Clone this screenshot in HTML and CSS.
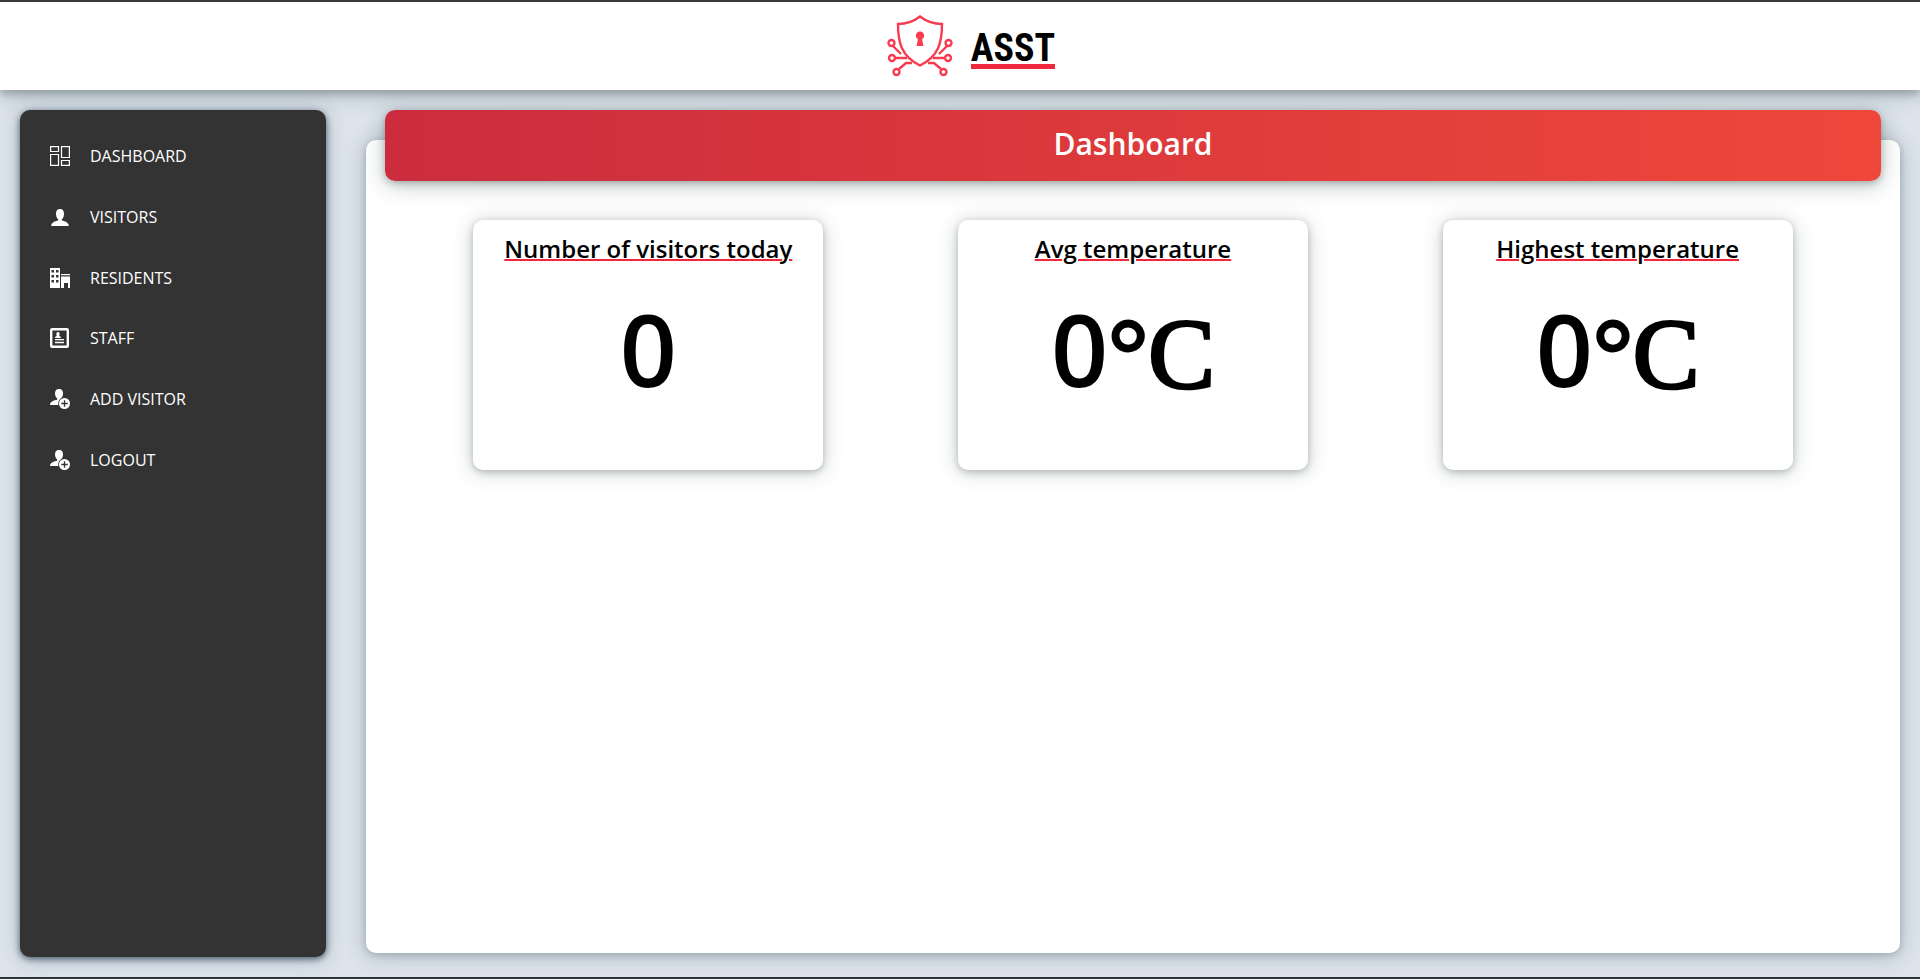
FILE: index.html
```html
<!DOCTYPE html>
<html lang="en">
<head>
<meta charset="utf-8">
<title>ASST Dashboard</title>
<link rel="stylesheet" href="styles.css">
</head>
<body>
<svg class="defs" aria-hidden="true">
  <symbol id="i-dashboard" viewBox="0 0 20 20"><path fill="none" stroke="currentColor" stroke-width="1.200" d="M.6.6h7.900v4.900H.6zM11.500.6h7.900v10.900h-7.900zM.6 8.500h7.900v10.900H.6zM11.500 14.500h7.900v4.900h-7.900z"/></symbol>
  <symbol id="i-person" viewBox="0 0 20 20"><path fill="currentColor" d="M10 2C7 2 6 4.200 6 7c0 2.400 1 4.300 2.200 5.300v1.200C5 14.200 1.200 15.500 1.200 19h17.600c0-3.500-3.800-4.800-7-5.500v-1.200C13 11.300 14 9.400 14 7c0-2.800-1-5-4-5z"/></symbol>
  <symbol id="i-building" viewBox="0 0 20 20"><path fill="currentColor" fill-rule="evenodd" d="M0 0h10v20H0zM1.500 2v2.500H4V2zM6 2v2.500h2.500V2zM1.500 7v2.500H4V7zM6 7v2.500h2.500V7zM1.500 12v2.500H4V12zM6 12v2.500h2.500V12zM11 6h9v1.300h-9zM11 8.500h9V20h-2v-5h-4v5h-3z"/></symbol>
  <symbol id="i-staff" viewBox="0 0 20 20"><path fill="none" stroke="currentColor" stroke-width="2.400" d="M1.200 2.200q0-1 1-1h14.600q1 0 1 1v15.600q0 1-1 1H2.200q-1 0-1-1z"/><path fill="currentColor" d="M8 4c-2 0-2 3-1 4-1 .3-2 .6-2 2h6c0-1.400-1-1.700-2-2 1-1 1-4-1-4zM5 11h9v1.300H5zM5 13.700h9v1.500H5z"/></symbol>
  <symbol id="i-add" viewBox="0 0 20 20"><path fill="currentColor" d="M9 0C6 0 5 2 5 4.500c0 2.200 1 4 2.200 5v1.300C4 11.500 0 12.500 0 16h8.300c-.5-3.500 1-6 3.300-7.300C12.600 7.700 13 6 13 4.500 13 2 12 0 9 0z"/><circle cx="14.500" cy="14.500" r="5.500" fill="currentColor"/><path stroke="#333" stroke-width="1.300" d="M14.500 11.300v6.400M11.300 14.500h6.400"/></symbol>
</svg>
<header class="topbar">
  <svg class="shield" viewBox="0 0 66 62" fill="none" stroke="#f83c50" stroke-width="2.400" aria-hidden="true">
    <path d="M33 1.500C26 7 18 9 11 9c0 18 3 32 22 41.500C52 41 55 27 55 9 48 9 40 7 33 1.500z"/>
    <path d="M6 31l8 8M60 31l-8 8M8.500 43H20M57.500 43H46M12 54l7-6h6M54 54l-7-6h-6"/>
    <circle cx="4.500" cy="28" r="3"/><circle cx="61.500" cy="28" r="3"/><circle cx="5" cy="43" r="3"/><circle cx="61" cy="43" r="3"/><circle cx="9.500" cy="57" r="3"/><circle cx="56.500" cy="57" r="3"/>
    <path fill="#f83c50" stroke="none" d="M33 16.500a4 4 0 0 1 2 7.500L36.500 31h-7L31 24A4 4 0 0 1 33 16.500z"/>
  </svg>
  <span class="brand">ASST</span>
</header>
<div class="layout">
  <nav class="sidebar">
    <div class="menu">
      <a href="#"><svg class="icon"><use href="#i-dashboard"/></svg>DASHBOARD</a>
      <a href="#"><svg class="icon"><use href="#i-person"/></svg>VISITORS</a>
      <a href="#"><svg class="icon"><use href="#i-building"/></svg>RESIDENTS</a>
      <a href="#"><svg class="icon"><use href="#i-staff"/></svg>STAFF</a>
      <a href="#"><svg class="icon"><use href="#i-add"/></svg>ADD VISITOR</a>
      <a href="#"><svg class="icon"><use href="#i-add"/></svg>LOGOUT</a>
    </div>
  </nav>
  <main class="panel">
    <h1 class="banner">Dashboard</h1>
    <div class="cards">
      <section class="card"><h2>Number of visitors today</h2><p class="value">0</p></section>
      <section class="card"><h2>Avg temperature</h2><p class="value">0<span class="unit">°C</span></p></section>
      <section class="card"><h2>Highest temperature</h2><p class="value">0<span class="unit">°C</span></p></section>
    </div>
  </main>
</div>
</body>
</html>
```
FILE: styles.css
```css
* { box-sizing: border-box; }
body {
  margin: 0;
  min-height: 100vh;
  display: flex;
  flex-direction: column;
  background: #dde4ec;
  border-top: 2px solid #3c383e;
  border-bottom: 2px solid #2e3333;
  font-family: "Open Sans", "Noto Sans", sans-serif;
  color: #000;
}
.defs { display: none; }
.topbar {
  height: 88px;
  padding-left: 22px;
  display: flex;
  align-items: center;
  justify-content: center;
  gap: 18px;
  background: #fff;
  box-shadow: 0 4px 8px rgba(40, 60, 60, .3), 0 4px 22px rgba(40, 60, 60, .25);
}
.shield { width: 66px; height: 62px; }
.brand {
  padding-top: 9px;
  font: bold 38px/32px "Roboto Condensed", Roboto, sans-serif;
  border-bottom: 5px solid #f0283e;
}
.layout {
  flex: 1;
  display: flex;
  gap: 40px;
  padding: 20px;
}
.sidebar {
  width: 306px;
  padding: 16px 30px;
  border-radius: 10px;
  background: #333;
  box-shadow: 0 2px 6px rgba(30, 50, 70, .7), 0 2px 20px rgba(40, 60, 80, .3);
}
.menu {
  height: 364px;
  display: flex;
  flex-direction: column;
}
.menu a {
  flex: 1;
  display: flex;
  align-items: center;
  gap: 20px;
  color: #fff;
  font-size: 16px;
  text-decoration: none;
}
.icon { width: 20px; height: 20px; }
.panel {
  flex: 1;
  margin: 30px 0 4px;
  border-radius: 10px;
  background: #fff;
  box-shadow: 0 2px 6px rgba(40, 60, 60, .2), 0 2px 22px rgba(40, 60, 70, .3);
}
.banner {
  margin: -30px 19px 0;
  padding: 13px 0 16px;
  border-radius: 10px;
  background: linear-gradient(to right, #cb2d3e, #ef473a);
  box-shadow: 0 2px 6px rgba(40, 60, 60, .3), 0 4px 22px rgba(40, 60, 60, .3);
  color: #fff;
  font-size: 30px;
  line-height: 42px;
  font-weight: 600;
  text-align: center;
}
.cards {
  display: flex;
  justify-content: space-around;
  padding: 39px 40px;
}
.card {
  width: 350px;
  height: 250px;
  padding-top: 11px;
  border-radius: 10px;
  background: #fff;
  text-align: center;
  box-shadow: 0 2px 6px rgba(40, 60, 60, .25), 0 2px 20px rgba(40, 60, 60, .25);
}
h2 {
  margin: 0;
  font-size: 24px;
  line-height: 36px;
  font-weight: 600;
  text-decoration: underline 2px #f0283e;
}
.value {
  margin: 13px 0 0;
  font-size: 100px;
  line-height: 136px;
  font-weight: 600;
}
.unit {
  font-family: "Liberation Serif", serif;
  font-weight: 400;
  -webkit-text-stroke: 3px #000;
}
```
